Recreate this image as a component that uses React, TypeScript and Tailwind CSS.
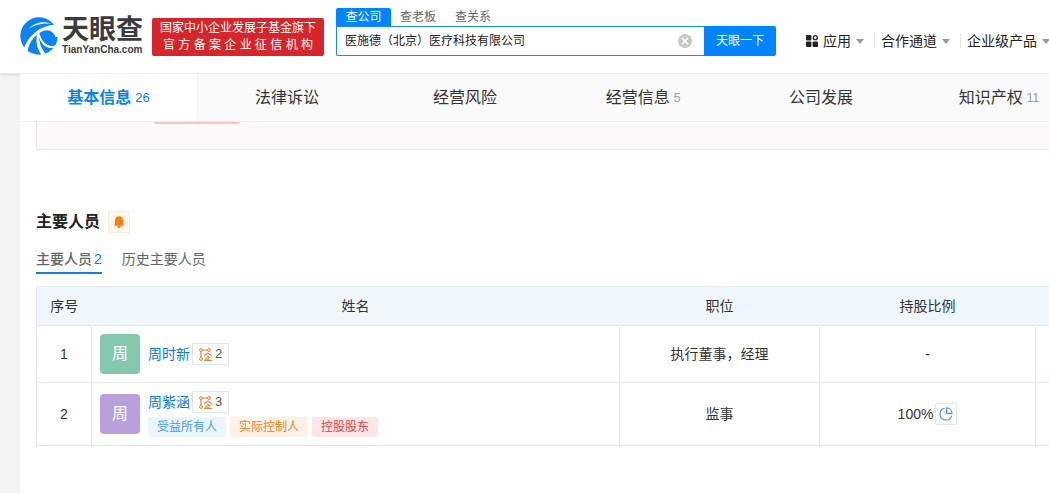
import React, { useState } from 'react';
import { X } from 'lucide-react';

interface Tag {
  text: string;
  className: string;
}

interface Person {
  id: number;
  name: string;
  avatar: string;
  companies: number;
  position: string;
  ratio: string;
  tags: Tag[];
}

const sections = [
  { name: '基本信息', count: 26 },
  { name: '法律诉讼' },
  { name: '经营风险' },
  { name: '经营信息', count: 5 },
  { name: '公司发展' },
  { name: '知识产权', count: 11 },
];

const searchTypes = ['查公司', '查老板', '查关系'];

const people: Person[] = [
  {
    id: 1,
    name: '周时新',
    avatar: 'bg-[#84c9ae]',
    companies: 2,
    position: '执行董事，经理',
    ratio: '-',
    tags: [],
  },
  {
    id: 2,
    name: '周紫涵',
    avatar: 'bg-[#b99fdc]',
    companies: 3,
    position: '监事',
    ratio: '100%',
    tags: [
      { text: '受益所有人', className: 'bg-[#ebf5ff] text-[#4a9bd6]' },
      { text: '实际控制人', className: 'bg-[#fff1e6] text-[#e08427]' },
      { text: '控股股东', className: 'bg-[#ffe6e8] text-[#dc4446]' },
    ],
  },
];

const LogoMark: React.FC = () => (
  <svg className="h-[38px] w-[38px] shrink-0" viewBox="0 0 112 112" aria-hidden="true">
    <circle cx="56" cy="56" r="55" fill="#0a84f5" />
    <g fill="#fff">
      <path d="M24 36C42 16 70 10 94 20C70 18 44 22 24 36Z" />
      <path d="M113 22C88 22 64 30 49 42C30 56 16 76 12 94L22 102C26 78 38 60 54 50C66 40 80 36 91 42C98 46 103 53 105 60L114 56Z" />
      <path d="M52 48C45 66 48 92 64 112L76 109C60 90 53 68 58 46Z" />
      <path d="M58 50C64 74 82 90 104 84L99 91C78 95 61 80 55 56Z" />
    </g>
  </svg>
);

const AppsIcon: React.FC = () => (
  <svg className="h-3 w-3" viewBox="0 0 12 12" fill="#222" aria-hidden="true">
    <rect x="0" y="0" width="5.4" height="5.4" rx="1" />
    <circle cx="9.3" cy="2.7" r="2" fill="none" stroke="#222" strokeWidth="1.3" />
    <rect x="0" y="6.6" width="5.4" height="5.4" rx="1" />
    <rect x="6.6" y="6.6" width="5.4" height="5.4" rx="1" />
  </svg>
);

const Caret: React.FC = () => (
  <svg className="h-[5px] w-2" viewBox="0 0 8 5" fill="#999" aria-hidden="true">
    <path d="M0 0H8L4 5Z" />
  </svg>
);

const BellIcon: React.FC = () => (
  <svg className="h-3 w-3" viewBox="0 0 12 12" fill="#ff7d0a" aria-hidden="true">
    <path d="M6 .3C8.7 .3 10 2.3 10 4.6V7.6L10.8 9.8H1.2L2 7.6V4.6C2 2.3 3.3 .3 6 .3Z" />
    <path d="M4.2 9.8H7.8C7.6 11.3 7 11.9 6 11.9S4.4 11.3 4.2 9.8Z" />
  </svg>
);

const RelationIcon: React.FC = () => (
  <svg className="h-[13px] w-[13px]" viewBox="0 0 13 13" fill="none" stroke="#e8822a" aria-hidden="true">
    <circle cx="2" cy="2" r="1.4" />
    <circle cx="10" cy="2" r="1.4" />
    <circle cx="2" cy="11" r="1.4" />
    <path d="M3.4 2H8.6M2 3.4V9.6" strokeWidth="1.2" />
    <path d="M5 8.4L9 5L13 8.4M9 7.5V12M9 9.5H11.2M7 9.5V12M5.2 12.4H12.8" strokeWidth="1.1" />
  </svg>
);

const PieIcon: React.FC = () => (
  <svg className="h-[14px] w-[14px]" viewBox="0 0 12 12" fill="none" stroke="#4a94d8" aria-hidden="true">
    <path d="M4.8 1.1A5.1 5.1 0 1 0 10.9 7.4" />
    <path d="M6.6 .8A4.8 4.8 0 0 1 11.2 5.4H6.6Z" />
  </svg>
);

const Header: React.FC = () => {
  const [searchType, setSearchType] = useState('查公司');
  const [keyword, setKeyword] = useState('医施德（北京）医疗科技有限公司');

  return (
    <header className="flex h-[74px] border-b border-[#ececec] bg-white pl-5 whitespace-nowrap shadow-sm">
      <a href="#" className="mt-4 flex h-10 shrink-0 items-center gap-1">
        <LogoMark />
        <span className="flex flex-col">
          <span className="text-[27px] leading-7 font-bold text-[#3b3b3b]">天眼查</span>
          <span className="text-[10px] leading-3 font-bold text-[#3b3b3b]">TianYanCha.com</span>
        </span>
      </a>

      <div className="mt-[18px] ml-[9px] flex h-[38px] w-[172px] shrink-0 flex-col items-center justify-center rounded-xs bg-[#d6262b] text-white">
        <span className="text-xs leading-[17px]">国家中小企业发展子基金旗下</span>
        <span className="text-xs leading-[17px]">官 方 备 案 企 业 征 信 机 构</span>
      </div>

      <div className="mt-2 ml-3 shrink-0">
        <div className="flex gap-[9px]">
          {searchTypes.map((type) => (
            <button
              key={type}
              onClick={() => setSearchType(type)}
              className={`h-[18px] rounded-t-xs text-xs leading-[18px] ${
                type === searchType ? 'w-[55px] bg-[#0084ff] text-white' : 'w-[46px] text-left text-[#666]'
              }`}
            >
              {type}
            </button>
          ))}
        </div>
        <form className="flex h-[30px]" onSubmit={(e) => e.preventDefault()}>
          <div className="flex w-[368px] items-center rounded-bl-xs border border-r-0 border-[#1a8fd0] pr-3 pl-2">
            <input
              type="text"
              aria-label="公司名称"
              value={keyword}
              onChange={(e) => setKeyword(e.target.value)}
              className="min-w-0 flex-1 text-xs text-[#222] outline-none"
            />
            <button
              type="button"
              aria-label="清空"
              onClick={() => setKeyword('')}
              className="flex h-[14px] w-[14px] items-center justify-center rounded-full bg-[#c8c8c8] text-white"
            >
              <X className="h-[10px] w-[10px]" strokeWidth={4} />
            </button>
          </div>
          <button type="submit" className="w-[72px] rounded-r-xs bg-[#0084ff] text-xs text-white">
            天眼一下
          </button>
        </form>
      </div>

      <nav className="mt-[34px] ml-[30px] flex h-[14px] shrink-0 items-center text-sm leading-[14px] text-[#222]">
        <a href="#" className="flex items-center gap-[5px] border-r border-[#e4e4e4] pr-[10px]">
          <AppsIcon />
          应用
          <Caret />
        </a>
        <a href="#" className="flex items-center gap-[5px] border-r border-[#e4e4e4] pr-[10px] pl-1.5">
          合作通道
          <Caret />
        </a>
        <a href="#" className="flex items-center gap-[5px] pl-1.5">
          企业级产品
          <Caret />
        </a>
      </nav>
    </header>
  );
};

const SectionTabs: React.FC = () => {
  const [active, setActive] = useState('基本信息');

  return (
    <nav className="flex h-12 border-b border-[#efefef] bg-[#fafafa]">
      {sections.map((section) => {
        const isActive = section.name === active;
        return (
          <button
            key={section.name}
            onClick={() => setActive(section.name)}
            className={`flex w-[178px] shrink-0 items-center justify-center gap-1 text-base ${
              isActive ? 'border-r border-[#f0f0f0] bg-white font-bold text-[#0a84e0]' : 'text-[#333]'
            }`}
          >
            {section.name}
            {section.count && (
              <span className={isActive ? 'text-[13px] font-normal' : 'text-xs text-[#999]'}>
                {section.count}
              </span>
            )}
          </button>
        );
      })}
    </nav>
  );
};

const PersonCell: React.FC<{ person: Person }> = ({ person }) => (
  <div className="flex items-center gap-2">
    <span className={`flex h-10 w-10 items-center justify-center rounded-sm text-base text-white ${person.avatar}`}>
      {person.name[0]}
    </span>
    <div className="flex flex-col gap-1">
      <div className="flex items-center gap-[2px]">
        <a href="#" className="text-sm text-[#0a7bd8]">
          {person.name}
        </a>
        <a
          href="#"
          className="flex h-[22px] w-[37px] items-center justify-center gap-[3px] border border-[#e0e6ee] text-[13px] text-[#555]"
        >
          <RelationIcon />
          {person.companies}
        </a>
      </div>
      {person.tags.length > 0 && (
        <div className="flex gap-1">
          {person.tags.map((tag) => (
            <span key={tag.text} className={`h-5 rounded-xs px-[9px] text-xs leading-5 ${tag.className}`}>
              {tag.text}
            </span>
          ))}
        </div>
      )}
    </div>
  </div>
);

const PeopleTable: React.FC = () => (
  <table className="w-[1184px] table-fixed border-collapse text-center text-sm text-[#333]">
    <colgroup>
      <col className="w-[55px]" />
      <col className="w-[528px]" />
      <col className="w-[200px]" />
      <col className="w-[216px]" />
      <col />
    </colgroup>
    <thead>
      <tr className="h-[39px] border border-[#e2ecf3] bg-[#eff7fd]">
        <th className="font-normal">序号</th>
        <th className="font-normal">姓名</th>
        <th className="font-normal">职位</th>
        <th className="font-normal">持股比例</th>
        <th></th>
      </tr>
    </thead>
    <tbody>
      {people.map((person) => (
        <tr key={person.id}>
          <td className="border border-[#dfe9ee]">{person.id}</td>
          <td className="border border-[#dfe9ee] p-2 text-left">
            <PersonCell person={person} />
          </td>
          <td className="border border-[#dfe9ee]">{person.position}</td>
          <td className="border border-[#dfe9ee]">
            <div className="flex items-center justify-center gap-[2px]">
              {person.ratio}
              {person.ratio !== '-' && (
                <button
                  aria-label="股权结构"
                  className="flex h-[22px] w-[22px] items-center justify-center rounded-xs border border-[#dde6ee]"
                >
                  <PieIcon />
                </button>
              )}
            </div>
          </td>
          <td className="border border-[#dfe9ee]"></td>
        </tr>
      ))}
    </tbody>
  </table>
);

const App: React.FC = () => {
  return (
    <div className="flex min-h-screen flex-col overflow-hidden bg-[#f4f4f4] font-['Liberation_Sans','Noto_Sans_CJK_SC',sans-serif]">
      <Header />
      <main className="ml-5 flex-1 bg-white">
        <SectionTabs />

        {/* Risk notice, mostly scrolled under the tab bar */}
        <div className="ml-4 h-7 border-b border-l border-[#f8e3e3] bg-[#fffafa]">
          <div className="ml-[117px] h-[2px] w-[86px] rounded-b-xs bg-[#f6c4c7]" />
        </div>

        <section className="mt-[61px] pl-4">
          <div className="flex items-center gap-2">
            <h2 className="text-base leading-5 font-bold text-[#222]">主要人员</h2>
            <button
              aria-label="监控"
              className="flex h-[22px] w-[22px] items-center justify-center border border-[#fdeeda] bg-[#fff6ee]"
            >
              <BellIcon />
            </button>
          </div>

          <div className="mt-[14px] mb-3 flex gap-5 text-sm leading-[25px] text-[#666]">
            <button className="flex gap-[2px] border-b-2 border-[#1480d8] font-medium">
              主要人员
              <span className="font-normal text-[#1480d8]">2</span>
            </button>
            <button className="border-b-2 border-transparent">历史主要人员</button>
          </div>

          <PeopleTable />
        </section>
      </main>
    </div>
  );
};

export default App;
